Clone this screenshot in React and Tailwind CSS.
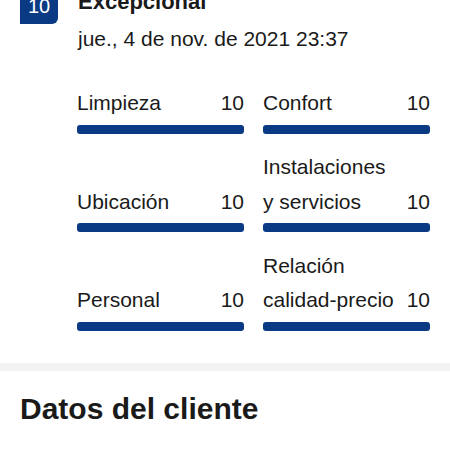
import React from "react";

const scores = [
  { label: ["Limpieza"], value: 10 },
  { label: ["Confort"], value: 10 },
  { label: ["Ubicación"], value: 10 },
  { label: ["Instalaciones", "y servicios"], value: 10 },
  { label: ["Personal"], value: 10 },
  { label: ["Relación", "calidad-precio"], value: 10 },
];

function ScoreItem({ item }) {
  return (
    <div className="flex flex-col justify-end">
      <div className="flex items-end justify-between leading-[34.5px]">
        <div>
          {item.label.map((line, i) => (
            <div key={i} className="whitespace-nowrap">
              {line}
            </div>
          ))}
        </div>
        <span>{item.value}</span>
      </div>
      {/* full bar, score is 10 */}
      <div className="mt-[4px] h-[9px] rounded-[3px] bg-[#0b3a85]" />
    </div>
  );
}

export default function App() {
  return (
    <div
      className="h-[450px] w-[450px] overflow-hidden bg-white text-[#1a1a1a]"
      style={{ fontFamily: '"Liberation Sans", Arial, sans-serif' }}
    >
      {/* Review header */}
      <div className="-mt-[14px] flex gap-[20px] pl-[20px]">
        <div className="flex h-[38px] w-[38px] shrink-0 items-center justify-center rounded-[6px] rounded-bl-none bg-[#0b3a85] pt-[2px] text-[20px] text-white">
          10
        </div>
        <div className="pt-[3px]">
          <div className="text-[22px] font-bold leading-[26px]">Excepcional</div>
          <div className="mt-[11px] text-[21px] leading-[26px]">
            jue., 4 de nov. de 2021 23:37
          </div>
        </div>
      </div>

      {/* Category scores */}
      <div className="mt-[34px] grid grid-cols-2 gap-x-[19px] gap-y-[16.5px] pl-[77px] pr-[20px] text-[21px]">
        {scores.map((item, index) => (
          <ScoreItem key={index} item={item} />
        ))}
      </div>

      <div className="mt-[32px] h-[8px] bg-[#f2f2f2]" />

      <h2 className="mt-[20px] pl-[20px] text-[30px] font-bold leading-[36px]">
        Datos del cliente
      </h2>
    </div>
  );
}
